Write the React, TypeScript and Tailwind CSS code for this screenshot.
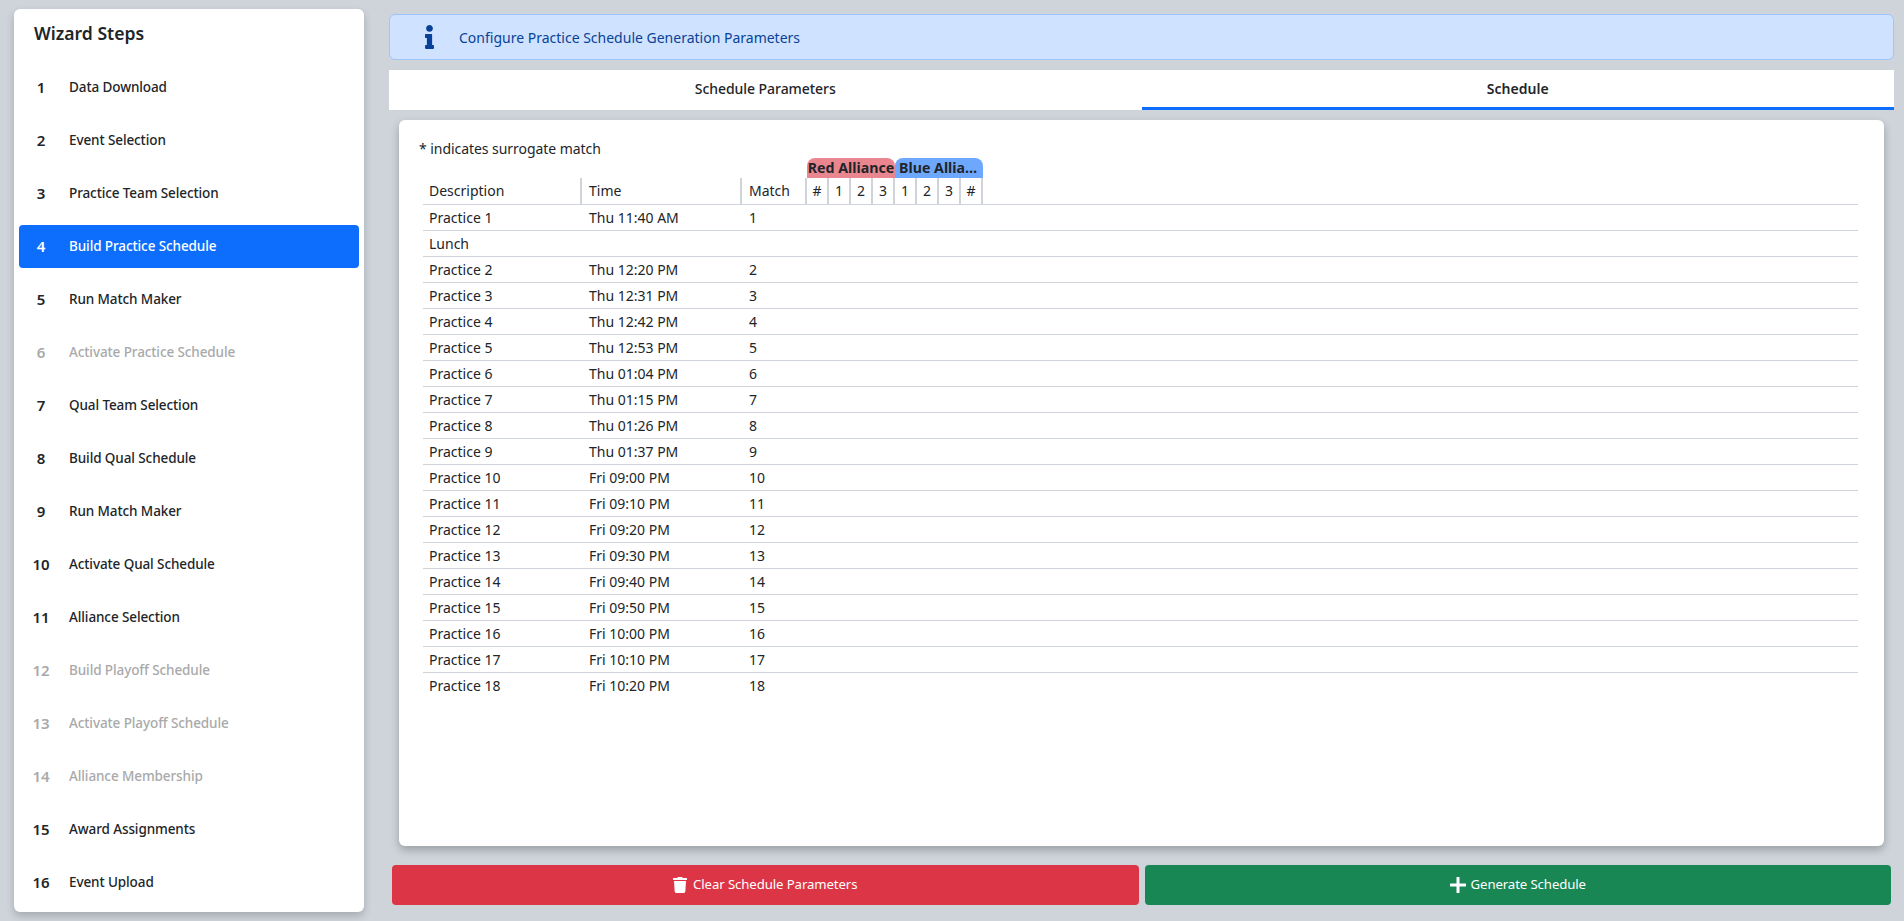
import { FaInfo, FaTrash } from "react-icons/fa";

const steps: [number, string, boolean?][] = [
  [1, "Data Download"],
  [2, "Event Selection"],
  [3, "Practice Team Selection"],
  [4, "Build Practice Schedule"],
  [5, "Run Match Maker"],
  [6, "Activate Practice Schedule", true],
  [7, "Qual Team Selection"],
  [8, "Build Qual Schedule"],
  [9, "Run Match Maker"],
  [10, "Activate Qual Schedule"],
  [11, "Alliance Selection"],
  [12, "Build Playoff Schedule", true],
  [13, "Activate Playoff Schedule", true],
  [14, "Alliance Membership", true],
  [15, "Award Assignments"],
  [16, "Event Upload"],
];

const rows: [string, string, string][] = [
  ["Practice 1", "Thu 11:40 AM", "1"],
  ["Lunch", "", ""],
  ["Practice 2", "Thu 12:20 PM", "2"],
  ["Practice 3", "Thu 12:31 PM", "3"],
  ["Practice 4", "Thu 12:42 PM", "4"],
  ["Practice 5", "Thu 12:53 PM", "5"],
  ["Practice 6", "Thu 01:04 PM", "6"],
  ["Practice 7", "Thu 01:15 PM", "7"],
  ["Practice 8", "Thu 01:26 PM", "8"],
  ["Practice 9", "Thu 01:37 PM", "9"],
  ["Practice 10", "Fri 09:00 PM", "10"],
  ["Practice 11", "Fri 09:10 PM", "11"],
  ["Practice 12", "Fri 09:20 PM", "12"],
  ["Practice 13", "Fri 09:30 PM", "13"],
  ["Practice 14", "Fri 09:40 PM", "14"],
  ["Practice 15", "Fri 09:50 PM", "15"],
  ["Practice 16", "Fri 10:00 PM", "16"],
  ["Practice 17", "Fri 10:10 PM", "17"],
  ["Practice 18", "Fri 10:20 PM", "18"],
];

const slots = ["#", "1", "2", "3", "1", "2", "3", "#"];

export default function App() {
  return (
    <div className="flex h-[921px] w-[1904px] overflow-hidden bg-[#ced4da] font-['Noto_Sans','Liberation_Sans',sans-serif] text-[14px] text-[#212529]">
      <aside className="mt-[9px] ml-[14px] h-[903px] w-[350px] shrink-0 rounded-md bg-white p-[5px] shadow-[0_4px_8px_rgba(0,0,0,0.2)]">
        <h2 className="mt-[8px] ml-[15px] mb-[21px] h-[23px] text-[17.6px] leading-[23px] font-semibold">Wizard Steps</h2>
        <ul className="flex flex-col gap-[10px]">
          {steps.map(([n, label, disabled]) => (
            <li
              key={n}
              className={
                "flex h-[43px] items-center rounded pl-3 " +
                (n === 4 ? "bg-[#0d6efd] text-white " : "") +
                (disabled ? "text-[#a8a9aa]" : "")
              }
            >
              <span className="w-5 text-center text-[15px] font-semibold">{n}</span>
              <span className="ml-[18px] text-[13.5px] font-medium tracking-[-0.1px]">{label}</span>
            </li>
          ))}
        </ul>
      </aside>

      <main className="ml-[25px] flex w-[1505px] flex-col pt-[14px]">
        <div className="flex h-[46px] items-center rounded-md border border-[#9ec5fe] bg-[#cfe2ff] pl-[29px] text-[#084298]">
          <FaInfo className="h-6 w-[21px]" />
          <span className="ml-[19px]">Configure Practice Schedule Generation Parameters</span>
        </div>

        <div className="mt-[10px] grid h-10 grid-cols-2 bg-white">
          <div className="flex items-center justify-center border-b-[3px] border-transparent font-medium tracking-[-0.05px]">Schedule Parameters</div>
          <div className="flex items-center justify-center border-b-[3px] border-[#0d6efd] font-semibold tracking-[0.05px]">Schedule</div>
        </div>

        <section className="mx-[10px] mt-[10px] h-[726px] rounded-md bg-white px-5 pt-[19px] shadow-[0_4px_8px_rgba(0,0,0,0.25)]">
          <p className="h-[19px] text-[14px] leading-[19px] tracking-[-0.05px]">* indicates surrogate match</p>
          <table className="ml-1 w-[1435px] table-fixed border-separate border-spacing-0 text-[14px]">
            <colgroup>
              <col className="w-[159px]" />
              <col className="w-[160px]" />
              <col className="w-[65px]" />
              {slots.map((_, i) => (
                <col key={i} className="w-[22px]" />
              ))}
              <col />
            </colgroup>
            <thead>
              <tr className="h-5">
                <th colSpan={3} className="p-0"></th>
                <th colSpan={4} className="h-5 overflow-hidden rounded-t-lg bg-[#ea868f] p-0 text-center text-[14.2px] leading-5 font-bold whitespace-nowrap">Red Alliance</th>
                <th colSpan={4} className="h-5 truncate rounded-t-lg bg-[#6ea8fe] px-1 text-center text-[14.2px] leading-5 font-bold">Blue Alliance</th>
                <th className="p-0"></th>
              </tr>
              <tr className="h-[27px]">
                <th className="border-r-2 border-b border-[#ced4da] pb-px pl-[6px] text-left font-normal">Description</th>
                <th className="border-r-2 border-b border-[#ced4da] pb-px pl-[7px] text-left font-normal">Time</th>
                <th className="border-r-2 border-b border-[#ced4da] pb-px pl-[7px] text-left font-normal">Match</th>
                {slots.map((s, i) => (
                  <th key={i} className="border-r-2 border-b border-[#ced4da] p-0 pb-px text-center font-normal">{s}</th>
                ))}
                <th className="border-b border-[#ced4da]"></th>
              </tr>
            </thead>
            <tbody>
              {rows.map(([d, t, m], i) => {
                const line = i < rows.length - 1 ? "border-b border-[#ced4da] " : "border-b border-transparent ";
                return (
                  <tr key={d} className="h-[26px]">
                    <td className={line + "pl-[6px]"}>{d}</td>
                    <td className={line + "pl-[7px]"}>{t}</td>
                    <td className={line + "pl-[7px]"}>{m}</td>
                    <td colSpan={9} className={line}></td>
                  </tr>
                );
              })}
            </tbody>
          </table>
        </section>

        <div className="mt-[19px] flex gap-[6px] px-[3px]">
          <button className="flex h-10 flex-1 items-center justify-center gap-[6px] rounded bg-[#dc3545] text-[13.2px] tracking-[-0.1px] text-white">
            <FaTrash className="h-4 w-[14px]" />
            Clear Schedule Parameters
          </button>
          <button className="flex h-10 flex-1 items-center justify-center gap-[5px] rounded bg-[#198754] text-[13.2px] tracking-[-0.1px] text-white">
            <svg viewBox="0 0 16 16" className="h-4 w-4" fill="currentColor" aria-hidden="true">
              <rect x="0" y="6.5" width="16" height="3" rx="0.5" />
              <rect x="6.5" y="0" width="3" height="16" rx="0.5" />
            </svg>
            Generate Schedule
          </button>
        </div>
      </main>
    </div>
  );
}
